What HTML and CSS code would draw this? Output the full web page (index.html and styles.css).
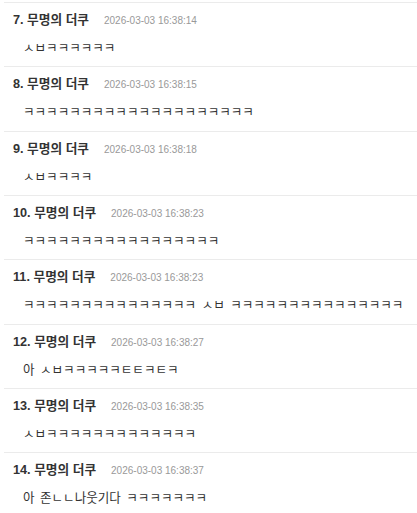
FILE: index.html
```html
<!DOCTYPE html>
<html lang="ko">
<head>
<meta charset="utf-8">
<link rel="stylesheet" href="styles.css">
</head>
<body>
<ul class="comments">
  <li class="comment">
    <div class="head"><span class="name">7. 무명의 더쿠</span><span class="time">2026-03-03 16:38:14</span></div>
    <div class="body">ㅅㅂㅋㅋㅋㅋㅋㅋ</div>
  </li>
  <li class="comment">
    <div class="head"><span class="name">8. 무명의 더쿠</span><span class="time">2026-03-03 16:38:15</span></div>
    <div class="body">ㅋㅋㅋㅋㅋㅋㅋㅋㅋㅋㅋㅋㅋㅋㅋㅋㅋㅋㅋㅋ</div>
  </li>
  <li class="comment">
    <div class="head"><span class="name">9. 무명의 더쿠</span><span class="time">2026-03-03 16:38:18</span></div>
    <div class="body">ㅅㅂㅋㅋㅋㅋ</div>
  </li>
  <li class="comment">
    <div class="head"><span class="name">10. 무명의 더쿠</span><span class="time">2026-03-03 16:38:23</span></div>
    <div class="body">ㅋㅋㅋㅋㅋㅋㅋㅋㅋㅋㅋㅋㅋㅋㅋㅋㅋ</div>
  </li>
  <li class="comment">
    <div class="head"><span class="name">11. 무명의 더쿠</span><span class="time">2026-03-03 16:38:23</span></div>
    <div class="body">ㅋㅋㅋㅋㅋㅋㅋㅋㅋㅋㅋㅋㅋㅋㅋ ㅅㅂ ㅋㅋㅋㅋㅋㅋㅋㅋㅋㅋㅋㅋㅋㅋㅋ</div>
  </li>
  <li class="comment">
    <div class="head"><span class="name">12. 무명의 더쿠</span><span class="time">2026-03-03 16:38:27</span></div>
    <div class="body">아 ㅅㅂㅋㅋㅋㅋㅋㅌㅌㅋㅌㅋ</div>
  </li>
  <li class="comment">
    <div class="head"><span class="name">13. 무명의 더쿠</span><span class="time">2026-03-03 16:38:35</span></div>
    <div class="body">ㅅㅂㅋㅋㅋㅋㅋㅋㅋㅋㅋㅋㅋㅋㅋ</div>
  </li>
  <li class="comment">
    <div class="head"><span class="name">14. 무명의 더쿠</span><span class="time">2026-03-03 16:38:37</span></div>
    <div class="body">아 존ㄴㄴ나웃기다 ㅋㅋㅋㅋㅋㅋㅋ</div>
  </li>
</ul>
</body>
</html>
```
FILE: styles.css
```css
html, body {
  margin: 0;
  padding: 0;
  background: #fff;
}
body {
  font-family: "Liberation Sans", "Noto Sans CJK KR", sans-serif;
  color: #333;
}
.comments {
  list-style: none;
  margin: 0 0 0 4px;
  padding: 2px 0 0 0;
}
.comment {
  border-top: 1px solid #ebebeb;
  padding: 8px 0 9.33px 9px;
  display: flex;
  flex-direction: column;
  gap: 10px;
}
.head {
  display: flex;
  align-items: baseline;
  height: 18px;
  line-height: 18px;
  white-space: nowrap;
}
.name {
  font-size: 12.7px;
  font-weight: bold;
  color: #333;
}
.time {
  font-size: 10px;
  color: #999;
  margin-left: 15px;
}
.body {
  font-size: 12.55px;
  height: 18px;
  line-height: 18px;
  padding-left: 10px;
  color: #333;
  white-space: nowrap;
  word-spacing: 2px;
}
```
